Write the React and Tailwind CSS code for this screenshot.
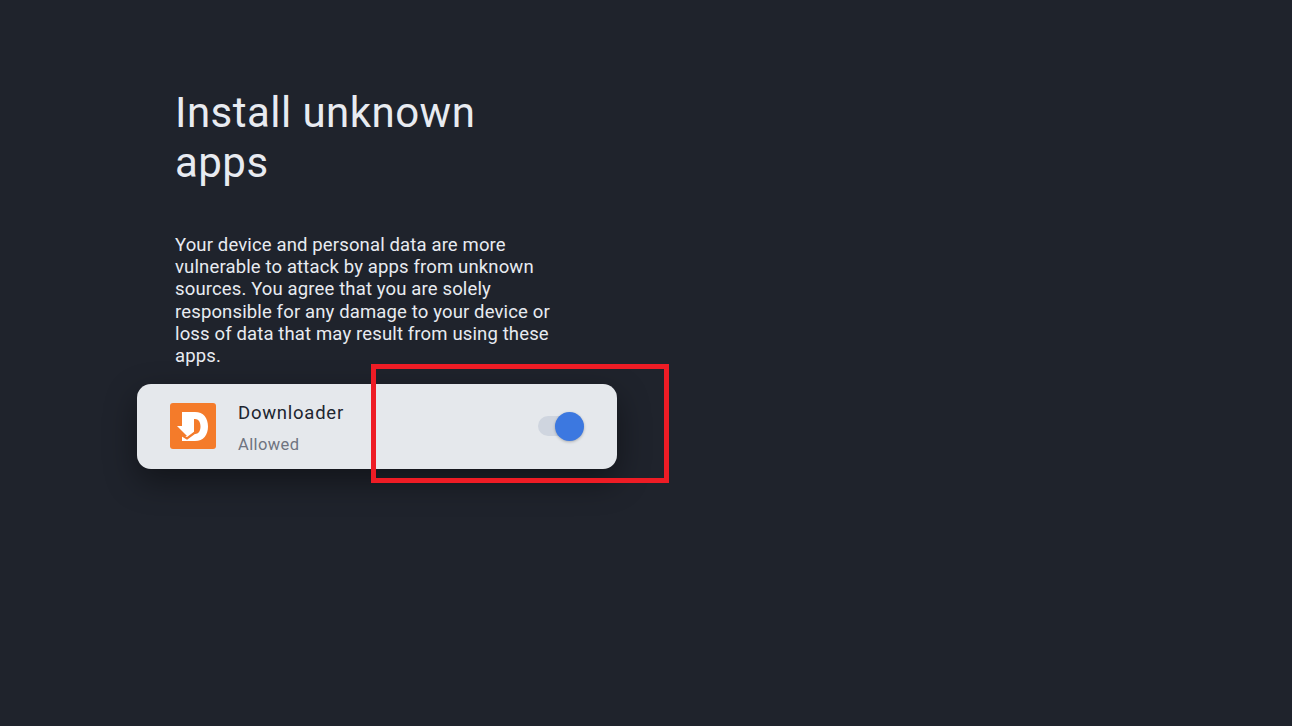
import React from 'react'

const Logo = () => (
  <svg width="46" height="46" viewBox="0 0 46 46" className="shrink-0">
    <rect width="46" height="46" rx="3" fill="#f47b2a" />
    <path d="M12 9H25C33.500 9 38 15 38 23.500C38 32 33.500 38 25 38H12V33H17V24H12Z M24 16V31H25C28.500 31 30.500 28 30.500 23.500C30.500 19 28.500 16 25 16Z" fill="#fff" fillRule="evenodd" />
    <path d="M7 23H24V26L17 33Z" fill="#fff" />
    <path d="M10 31L17 35.500L27 28" fill="none" stroke="#f47b2a" strokeWidth="2.200" />
  </svg>
)

const App = () => {
  return (
    <div className="relative h-[726px] w-[1292px] overflow-hidden bg-[#1f232c] font-['Roboto',sans-serif]">
      <div className="w-[480px] ml-[137px] pt-[88px]">
        <div className="pl-[38px] pr-[50px]">
          <h1 className="text-[42px] leading-[50px] font-normal text-[#e8ebf1] tracking-[0.47px]">
            Install unknown apps
          </h1>
          <p className="mt-[46px] text-[18.500px] leading-[22.200px] text-[#e8ebf1] tracking-[0.14px]">
            Your device and personal data are more vulnerable to attack by apps from unknown sources. You agree that you are solely responsible for any damage to your device or loss of data that may result from using these apps.
          </p>
        </div>

        <div className="mt-[17px] h-[85px] rounded-[14px] bg-[#e5e8ec] flex items-center pl-[33px] pr-[33px] shadow-[0_12px_32px_rgba(0,0,0,0.42)]">
          <div className="mb-px">
            <Logo />
          </div>
          <div className="ml-[22px] flex-1 pt-[4px]">
            <p className="text-[18.500px] leading-[22px] text-[#202530] tracking-[0.75px]">Downloader</p>
            <p className="mt-[11px] text-[16.500px] leading-[20px] text-[#6f7480] tracking-[0.4px]">Allowed</p>
          </div>
          <div className="relative mb-px w-[46px] h-[20px] rounded-full bg-[#cfd5df]">
            <div className="absolute right-0 top-[-4px] w-[29px] h-[29px] rounded-full bg-[#3c78e0] shadow-[0_1px_3px_rgba(0,0,0,0.25)]"></div>
          </div>
        </div>
      </div>

      <div className="absolute left-[371px] top-[364px] w-[298px] h-[119px] border-[5px] border-[#ee1c25]"></div>
    </div>
  )
}

export default App
